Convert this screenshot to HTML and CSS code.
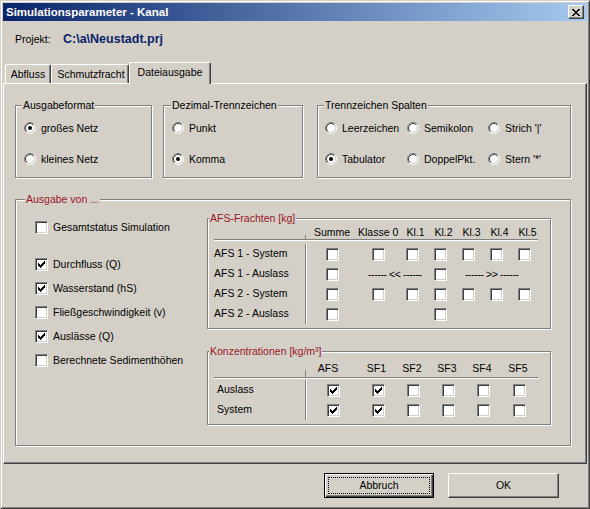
FILE: index.html
```html
<!DOCTYPE html>
<html lang="de">
<head>
<meta charset="utf-8">
<title>Simulationsparameter - Kanal</title>
<link rel="stylesheet" href="styles.css">
</head>
<body>
<svg class="defs" aria-hidden="true">
  <symbol id="rb" viewBox="0 0 12 12">
    <circle cx="6" cy="6" r="4.5" fill="#fff"/>
    <path d="M2.11 9.89A5.5 5.5 0 0 1 9.89 2.11" fill="none" stroke="#808080"/>
    <path d="M9.89 2.11A5.5 5.5 0 0 1 2.11 9.89" fill="none" stroke="#fff"/>
    <path d="M2.82 9.18A4.5 4.5 0 0 1 9.18 2.82" fill="none" stroke="#404040"/>
    <path d="M9.18 2.82A4.5 4.5 0 0 1 2.82 9.18" fill="none" stroke="#d4d0c8"/>
  </symbol>
  <symbol id="rbon" viewBox="0 0 12 12">
    <use href="#rb"/>
    <circle cx="6" cy="6" r="2" fill="#000"/>
  </symbol>
  <symbol id="chk" viewBox="0 0 7 7">
    <path d="M0 2h1v3h-1z M1 3h1v3h-1z M2 4h1v3h-1z M3 3h1v3h-1z M4 2h1v3h-1z M5 1h1v3h-1z M6 0h1v3h-1z" fill="#000"/>
  </symbol>
</svg>
<div class="window">
  <div class="titlebar">
    <span class="title">Simulationsparameter - Kanal</span>
    <button class="close" aria-label="Schließen"><svg viewBox="0 0 8 7"><path d="M0 0h2v1h-2z M6 0h2v1h-2z M1 1h2v1h-2z M5 1h2v1h-2z M2 2h4v1h-4z M3 3h2v1h-2z M2 4h4v1h-4z M1 5h2v1h-2z M5 5h2v1h-2z M0 6h2v1h-2z M6 6h2v1h-2z" fill="#000"/></svg></button>
  </div>
  <div class="project"><span class="plabel">Projekt:</span><span class="ppath">C:\a\Neustadt.prj</span></div>
  <div class="tabs">
    <div class="tab t1">Abfluss</div>
    <div class="tab t2">Schmutzfracht</div>
    <div class="tab active">Dateiausgabe</div>
  </div>
  <div class="panel">
    <div class="toprow">
      <div class="group g1">
        <span class="legend">Ausgabeformat</span>
        <div class="radiocol">
          <div class="opt"><svg class="rb"><use href="#rbon"/></svg>großes Netz</div>
          <div class="opt"><svg class="rb"><use href="#rb"/></svg>kleines Netz</div>
        </div>
      </div>
      <div class="group g2">
        <span class="legend">Dezimal-Trennzeichen</span>
        <div class="radiocol">
          <div class="opt"><svg class="rb"><use href="#rb"/></svg>Punkt</div>
          <div class="opt"><svg class="rb"><use href="#rbon"/></svg>Komma</div>
        </div>
      </div>
      <div class="group g3">
        <span class="legend">Trennzeichen Spalten</span>
        <div class="radiogrid">
          <div class="opt"><svg class="rb"><use href="#rb"/></svg>Leerzeichen</div>
          <div class="opt"><svg class="rb"><use href="#rb"/></svg>Semikolon</div>
          <div class="opt"><svg class="rb"><use href="#rb"/></svg>Strich '|'</div>
          <div class="opt"><svg class="rb"><use href="#rbon"/></svg>Tabulator</div>
          <div class="opt"><svg class="rb"><use href="#rb"/></svg>DoppelPkt.</div>
          <div class="opt"><svg class="rb"><use href="#rb"/></svg>Stern '*'</div>
        </div>
      </div>
    </div>

    <div class="group ausgabe">
      <span class="legend red">Ausgabe von ...</span>
      <div class="leftcol">
        <div class="chkrow"><span class="cb"></span>Gesamtstatus Simulation</div>
        <div class="chkrow gap"><span class="cb"><svg><use href="#chk"/></svg></span>Durchfluss (Q)</div>
        <div class="chkrow"><span class="cb"><svg><use href="#chk"/></svg></span>Wasserstand (hS)</div>
        <div class="chkrow"><span class="cb"></span>Fließgeschwindigkeit (v)</div>
        <div class="chkrow"><span class="cb"><svg><use href="#chk"/></svg></span>Auslässe (Q)</div>
        <div class="chkrow"><span class="cb"></span>Berechnete Sedimenthöhen</div>
      </div>
      <div class="rightcol">
        <div class="group afs">
          <span class="legend red">AFS-Frachten [kg]</span>
          <div class="thead">
            <div class="lab"></div>
            <div class="h w52">Summe</div>
            <div class="h w40">Klasse 0</div>
            <div class="h w28 kl">Kl.1</div>
            <div class="h w28 kl">Kl.2</div>
            <div class="h w28 kl">Kl.3</div>
            <div class="h w28 kl">Kl.4</div>
            <div class="h w28 kl">Kl.5</div>
          </div>
          <div class="tbody">
            <div class="labs">
              <div>AFS 1 - System</div>
              <div>AFS 1 - Auslass</div>
              <div>AFS 2 - System</div>
              <div>AFS 2 - Auslass</div>
            </div>
            <div class="cells">
              <div class="row">
                <div class="c w52"><span class="cb"></span></div>
                <div class="c w40"><span class="cb"></span></div>
                <div class="c w28"><span class="cb"></span></div>
                <div class="c w28"><span class="cb"></span></div>
                <div class="c w28"><span class="cb"></span></div>
                <div class="c w28"><span class="cb"></span></div>
                <div class="c w28"><span class="cb"></span></div>
              </div>
              <div class="row">
                <div class="c w52"><span class="cb"></span></div>
                <div class="dash span2">------ &lt;&lt; ------</div>
                <div class="c w28"><span class="cb"></span></div>
                <div class="dash span3">------ &gt;&gt; ------</div>
              </div>
              <div class="row">
                <div class="c w52"><span class="cb"></span></div>
                <div class="c w40"><span class="cb"></span></div>
                <div class="c w28"><span class="cb"></span></div>
                <div class="c w28"><span class="cb"></span></div>
                <div class="c w28"><span class="cb"></span></div>
                <div class="c w28"><span class="cb"></span></div>
                <div class="c w28"><span class="cb"></span></div>
              </div>
              <div class="row">
                <div class="c w52"><span class="cb"></span></div>
                <div class="c w40"></div>
                <div class="c w28"></div>
                <div class="c w28"><span class="cb"></span></div>
              </div>
            </div>
          </div>
        </div>

        <div class="group konz">
          <span class="legend red">Konzentrationen [kg/m³]</span>
          <div class="thead k">
            <div class="lab"></div>
            <div class="h w54 afsh">AFS</div>
            <div class="h w36 sf">SF1</div>
            <div class="h w35 sf">SF2</div>
            <div class="h w35 sf">SF3</div>
            <div class="h w35 sf">SF4</div>
            <div class="h w37 sf">SF5</div>
          </div>
          <div class="tbody k">
            <div class="labs">
              <div>Auslass</div>
              <div>System</div>
            </div>
            <div class="cells">
              <div class="row">
                <div class="c w54"><span class="cb"><svg><use href="#chk"/></svg></span></div>
                <div class="c w36"><span class="cb"><svg><use href="#chk"/></svg></span></div>
                <div class="c w35"><span class="cb"></span></div>
                <div class="c w35"><span class="cb"></span></div>
                <div class="c w35"><span class="cb"></span></div>
                <div class="c w37"><span class="cb"></span></div>
              </div>
              <div class="row">
                <div class="c w54"><span class="cb"><svg><use href="#chk"/></svg></span></div>
                <div class="c w36"><span class="cb"><svg><use href="#chk"/></svg></span></div>
                <div class="c w35"><span class="cb"></span></div>
                <div class="c w35"><span class="cb"></span></div>
                <div class="c w35"><span class="cb"></span></div>
                <div class="c w37"><span class="cb"></span></div>
              </div>
            </div>
          </div>
        </div>
      </div>
    </div>
  </div>
  <div class="buttons">
    <button class="btn default abbruch"><span class="focus">Abbruch</span></button>
    <button class="btn ok">OK</button>
  </div>
</div>
</body>
</html>
```

FILE: styles.css
```css
* { box-sizing: border-box; }

body {
  margin: 0;
  background: #d4d0c8;
  font-family: "Liberation Sans", Arial, sans-serif;
  font-size: 10.5px;
  line-height: 13px;
  color: #000;
}

.defs { position: absolute; width: 0; height: 0; overflow: hidden; }

.window {
  width: 590px;
  height: 509px;
  border: 1px solid;
  border-color: #d4d0c8 #404040 #404040 #d4d0c8;
  box-shadow: inset 1px 1px 0 #fff, inset -1px -1px 0 #808080;
  padding: 2px;
  display: flex;
  flex-direction: column;
}
.window > * { flex: none; }

/* title bar */
.titlebar {
  height: 18px;
  background: linear-gradient(to right, #0a246a, #a6caf0);
  display: flex;
  align-items: center;
  justify-content: space-between;
  padding: 0 3px 0 3px;
}
.title { color: #fff; font-weight: bold; font-size: 11.5px; }
.close {
  width: 16px;
  height: 14px;
  padding: 0;
  background: #d4d0c8;
  border: 1px solid;
  border-color: #fff #404040 #404040 #fff;
  box-shadow: inset -1px -1px 0 #808080;
  display: flex;
  align-items: center;
  justify-content: center;
}
.close svg { width: 8px; height: 7px; display: block; }

/* project line */
.project {
  margin-top: 11px;
  height: 14px;
  padding-left: 12px;
  display: flex;
  align-items: center;
}
.plabel { width: 48px; }
.ppath { font-weight: bold; font-size: 12.5px; color: #0a246a; }

/* tabs */
.tabs {
  margin-top: 16px;
  height: 21px;
  display: flex;
  align-items: flex-end;
  padding-left: 2px;
  position: relative;
  z-index: 1;
}
.tab {
  height: 19px;
  padding-top: 3px;
  text-align: center;
  background: #d4d0c8;
  border-top: 1px solid #fff;
  border-left: 1px solid #fff;
  border-right: 1px solid #404040;
  box-shadow: inset -1px 0 0 #808080;
  border-top-left-radius: 2px;
  border-top-right-radius: 2px;
}
.t1 { width: 46px; }
.t2 { width: 78px; padding-left: 2px; }
.tab.active {
  width: 82px;
  height: 22px;
  margin-bottom: -1px;
  padding-top: 3px;
}

/* panel */
.panel {
  height: 381px;
  border: 1px solid;
  border-color: #fff #404040 #404040 #fff;
  box-shadow: inset -1px -1px 0 #808080;
  padding: 21px 0 0 11px;
}

.group {
  position: relative;
  border: 1px solid #808080;
  box-shadow: inset 1px 1px 0 #fff, 1px 1px 0 #fff;
}
.legend {
  position: absolute;
  top: -7px;
  left: 6px;
  padding: 0 1px;
  background: #d4d0c8;
  line-height: 13px;
  white-space: nowrap;
}
.legend.red { color: #9a1526; }

.toprow { display: flex; height: 73px; }
.g1 { width: 137px; margin-right: 11px; }
.g2 { width: 140px; margin-right: 14px; }
.g2 .legend { left: 7px; }
.g3 { width: 254px; }

.radiocol {
  padding: 15px 0 0 8px;
  display: flex;
  flex-direction: column;
  gap: 17px;
}
.radiogrid {
  padding: 15px 0 0 7px;
  display: grid;
  grid-template-columns: 82px 81px 1fr;
  row-gap: 17px;
}
.opt {
  display: flex;
  align-items: center;
  height: 14px;
  white-space: nowrap;
}
.rb { width: 12px; height: 12px; margin-right: 5px; flex: none; display: block; }

/* checkbox */
.cb {
  width: 13px;
  height: 13px;
  flex: none;
  background: #fff;
  border: 1px solid;
  border-color: #808080 #fff #fff #808080;
  box-shadow: inset 1px 1px 0 #404040, inset -1px -1px 0 #d4d0c8;
  display: flex;
  align-items: center;
  justify-content: center;
}
.cb svg { width: 7px; height: 7px; display: block; }

/* Ausgabe von */
.ausgabe {
  margin-top: 21px;
  width: 556px;
  height: 247px;
  display: flex;
}
.ausgabe > .legend { left: 9px; }

.leftcol { width: 191px; padding: 15px 0 0 19px; }
.chkrow {
  display: flex;
  align-items: center;
  height: 24px;
  white-space: nowrap;
}
.chkrow .cb { margin-right: 5px; }
.chkrow.gap { margin-top: 13px; }

.rightcol { width: 344px; padding-top: 18px; }
.afs { height: 111px; padding: 7px 0 0 6px; }
.konz { margin-top: 22px; height: 74px; padding: 10px 0 0 6px; }
.afs > .legend, .konz > .legend { left: 1px; }

.thead {
  display: flex;
  width: 324px;
  height: 14px;
  border-bottom: 1px solid #808080;
  box-shadow: 0 1px 0 #fff;
}
.thead .lab {
  width: 92px;
  background: linear-gradient(#808080, #808080) no-repeat right 0 bottom 0 / 1px 4px;
}
.thead.k { height: 16px; }
.thead.k .lab { background-size: 1px 7px; }
.h { text-align: center; white-space: nowrap; }
.h.kl { padding-left: 7px; }
.h.afsh { padding-right: 10px; }
.h.sf { padding-right: 3px; }

.tbody { display: flex; padding-top: 4px; }
.tbody.k { padding-top: 2px; }
.labs {
  width: 92px;
  border-right: 1px solid #808080;
  box-shadow: 1px 0 0 #fff;
}
.labs div { height: 20px; line-height: 19px; white-space: nowrap; }
.tbody.k .labs div { padding-left: 3px; }

.row { display: flex; align-items: center; height: 20px; }
.c { display: flex; justify-content: center; }
.w52 { width: 52px; }
.w40 { width: 40px; }
.w28 { width: 28px; }
.w54 { width: 54px; }
.w36 { width: 36px; }
.w35 { width: 35px; }
.w37 { width: 37px; }
.dash { white-space: nowrap; line-height: 13px; letter-spacing: -0.4px; }
.span2 { width: 68px; padding-left: 10px; }
.span3 { width: 84px; padding-left: 11px; }

/* buttons */
.buttons {
  display: flex;
  justify-content: flex-end;
  gap: 14px;
  margin-top: 9px;
  padding-right: 28px;
}
.btn {
  height: 25px;
  background: #d4d0c8;
  border: 1px solid;
  border-color: #fff #404040 #404040 #fff;
  box-shadow: inset -1px -1px 0 #808080;
  padding: 0;
  font: inherit;
  color: #000;
  display: flex;
  align-items: center;
  justify-content: center;
}
.abbruch { width: 110px; }
.ok { width: 111px; }
.btn.default {
  border-color: #000;
  box-shadow: inset 1px 1px 0 #fff, inset -1px -1px 0 #404040, inset -2px -2px 0 #808080;
  padding: 3px;
  align-items: stretch;
}
.focus {
  flex: 1;
  border: 1px dotted #000;
  display: flex;
  align-items: center;
  justify-content: center;
}
```
